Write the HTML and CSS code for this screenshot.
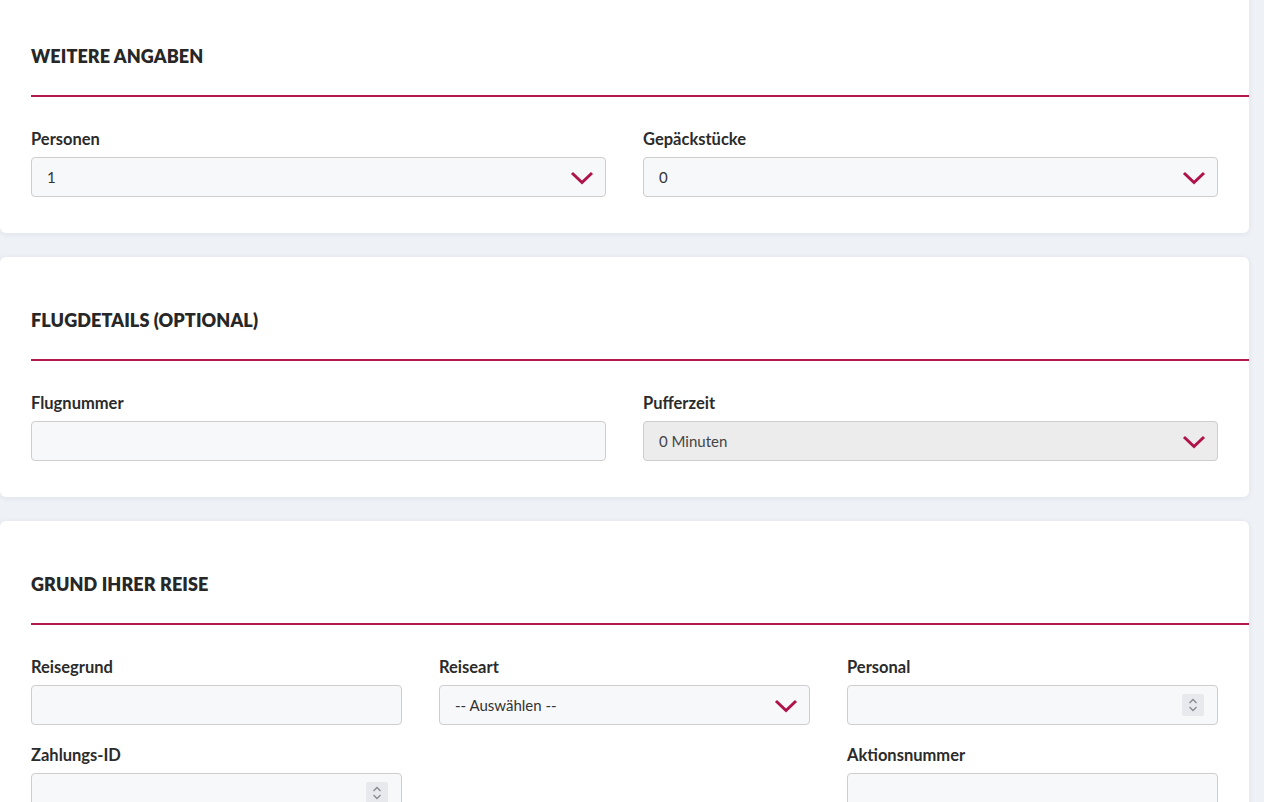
FILE: index.html
```html
<!DOCTYPE html>
<html lang="de">
<head>
  <meta charset="UTF-8">
  <meta name="viewport" content="width=device-width, initial-scale=1.0">
  <title>Buchung – Weitere Angaben</title>
  <link rel="stylesheet" href="styles.css">
</head>
<body>
  <div class="page">

    <section class="card">
      <h2 class="card-title">Weitere Angaben</h2>
      <div class="row two">
        <div class="field">
          <label>Personen</label>
          <div class="select-wrap">
            <select class="control">
              <option>1</option>
              <option>2</option>
              <option>3</option>
            </select>
            <svg class="chevron" viewBox="0 0 24 14"><polyline points="2,2 12,11.5 22,2"/></svg>
          </div>
        </div>
        <div class="field">
          <label>Gepäckstücke</label>
          <div class="select-wrap">
            <select class="control">
              <option>0</option>
              <option>1</option>
              <option>2</option>
            </select>
            <svg class="chevron" viewBox="0 0 24 14"><polyline points="2,2 12,11.5 22,2"/></svg>
          </div>
        </div>
      </div>
    </section>

    <section class="card">
      <h2 class="card-title">Flugdetails (optional)</h2>
      <div class="row two">
        <div class="field">
          <label>Flugnummer</label>
          <input class="control" type="text">
        </div>
        <div class="field">
          <label>Pufferzeit</label>
          <div class="select-wrap">
            <select class="control" disabled>
              <option>0 Minuten</option>
            </select>
            <svg class="chevron" viewBox="0 0 24 14"><polyline points="2,2 12,11.5 22,2"/></svg>
          </div>
        </div>
      </div>
    </section>

    <section class="card">
      <h2 class="card-title">Grund Ihrer Reise</h2>
      <div class="row three">
        <div class="field">
          <label>Reisegrund</label>
          <input class="control" type="text">
        </div>
        <div class="field">
          <label>Reiseart</label>
          <div class="select-wrap">
            <select class="control">
              <option>-- Auswählen --</option>
              <option>Geschäftlich</option>
              <option>Privat</option>
            </select>
            <svg class="chevron" viewBox="0 0 24 14"><polyline points="2,2 12,11.5 22,2"/></svg>
          </div>
        </div>
        <div class="field">
          <label>Personal</label>
          <div class="number-wrap">
            <input class="control" type="text" inputmode="numeric">
            <span class="spinner">
              <svg viewBox="0 0 10 16"><polyline points="1.5,6 5,2.5 8.5,6"/><polyline points="1.5,10 5,13.5 8.5,10"/></svg>
            </span>
          </div>
        </div>
        <div class="field">
          <label>Zahlungs-ID</label>
          <div class="number-wrap">
            <input class="control" type="text" inputmode="numeric">
            <span class="spinner">
              <svg viewBox="0 0 10 16"><polyline points="1.5,6 5,2.5 8.5,6"/><polyline points="1.5,10 5,13.5 8.5,10"/></svg>
            </span>
          </div>
        </div>
        <div class="field empty"></div>
        <div class="field">
          <label>Aktionsnummer</label>
          <input class="control" type="text">
        </div>
      </div>
    </section>

  </div>
</body>
</html>
```

FILE: styles.css
```css
body {
  margin: 0;
  background-color: #eef1f6;
  font-family: "Source Sans Pro", Lato, "Liberation Sans", sans-serif;
  color: #333;
  overflow: hidden;
}

.page {
  width: 1249px;
  margin-top: -7px;
  display: flex;
  flex-direction: column;
  gap: 24px;
}

.card {
  background-color: #fff;
  border-radius: 6px;
  box-shadow: 0 1px 6px rgba(40, 60, 90, 0.08);
  padding: 44px 31px 36px 31px;
}

.card-title {
  margin: 0 -31px 0 0;
  padding-bottom: 20px;
  border-bottom: 2px solid #b21a4d;
  font-size: 18px;
  font-weight: 800;
  line-height: 38px;
  text-transform: uppercase;
  color: #272727;
  letter-spacing: 0.1px;
}

.row {
  display: grid;
  column-gap: 37px;
  row-gap: 20px;
  margin-top: 32px;
}

.row.two {
  grid-template-columns: repeat(2, 1fr);
}

.row.three {
  grid-template-columns: repeat(3, 1fr);
}

.field label {
  display: block;
  font-size: 16.5px;
  font-weight: 700;
  line-height: 20px;
  margin-bottom: 8px;
  color: #2b2b2b;
}

.control {
  display: block;
  box-sizing: border-box;
  width: 100%;
  height: 40px;
  padding: 0 15px;
  border: 1px solid #cdcdcd;
  border-radius: 4px;
  background-color: #f7f8fa;
  font-family: inherit;
  font-size: 15px;
  color: #333;
  outline: none;
}

select.control {
  appearance: none;
  -webkit-appearance: none;
}

select.control:disabled {
  background-color: #ececec;
  color: #444;
  opacity: 1;
}

.select-wrap,
.number-wrap {
  position: relative;
}

.chevron {
  position: absolute;
  right: 12px;
  top: 14px;
  width: 24px;
  height: 14px;
  fill: none;
  stroke: #b0134a;
  stroke-width: 3;
  pointer-events: none;
}

.spinner {
  position: absolute;
  right: 14px;
  top: 9px;
  width: 22px;
  height: 22px;
  background-color: #e8e9ec;
  border-radius: 2px;
  display: flex;
  align-items: center;
  justify-content: center;
}

.spinner svg {
  width: 10px;
  height: 16px;
  fill: none;
  stroke: #868990;
  stroke-width: 1.3;
}
```
